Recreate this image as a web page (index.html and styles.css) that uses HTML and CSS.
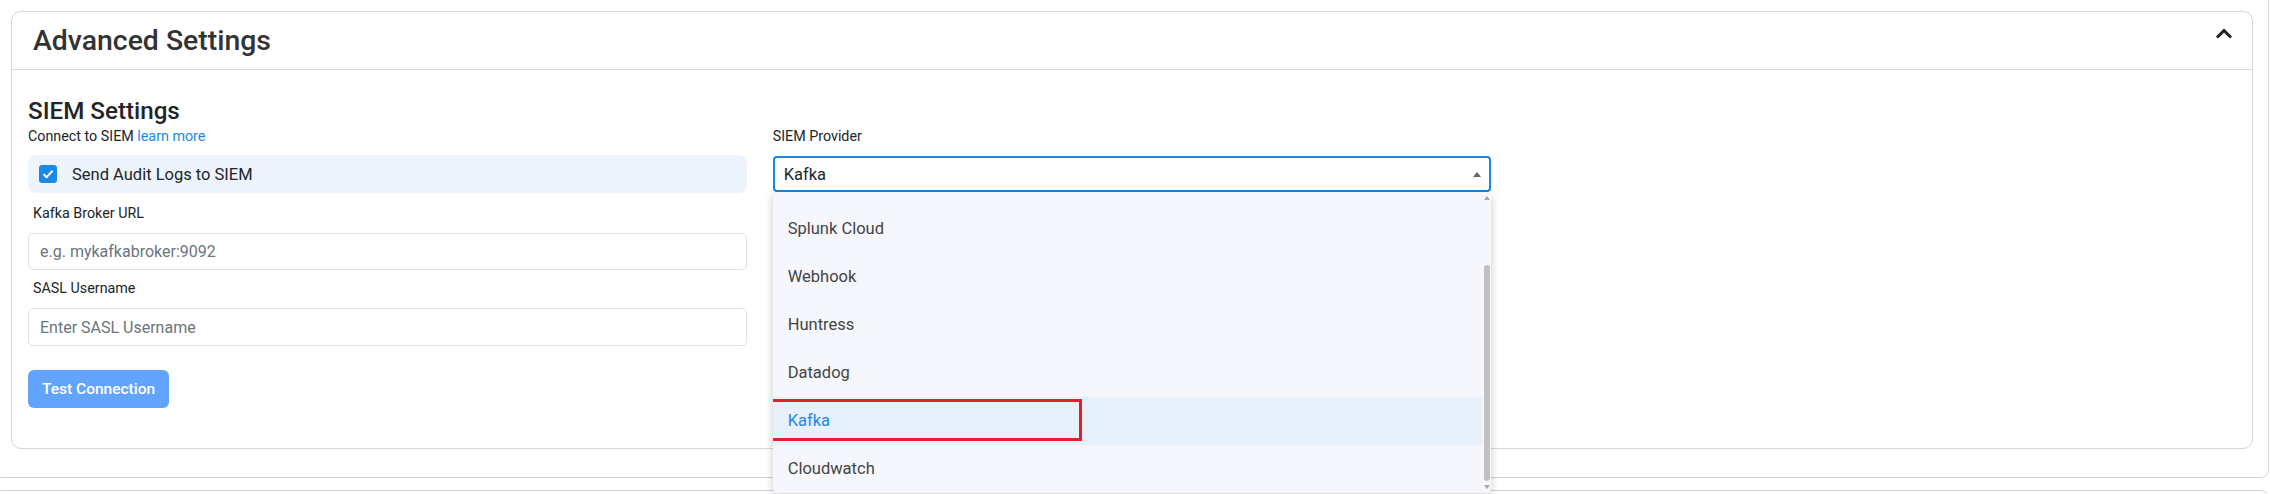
FILE: index.html
```html
<!DOCTYPE html>
<html lang="en">
<head>
<meta charset="utf-8">
<title>Advanced Settings</title>
<link rel="stylesheet" href="styles.css">
</head>
<body>
<div class="page">
  <section class="panel">
    <div class="card">
      <div class="card-header">
        <h2 class="card-title">Advanced Settings</h2>
        <svg class="chevron" width="18" height="11" viewBox="0 0 18 11" aria-hidden="true"><polyline points="2,9.5 9,2.5 16,9.5" fill="none" stroke="#1a1a1a" stroke-width="3"/></svg>
      </div>
      <div class="card-body">
        <h3 class="section-title">SIEM Settings</h3>
        <div class="grid">
          <div class="col">
            <div class="hint">Connect to SIEM <a class="link" href="#">learn more</a></div>
            <label class="check-row">
              <span class="checkbox"><svg width="12" height="10" viewBox="0 0 12 10" aria-hidden="true"><path d="M1.5 5.2 L4.6 8.1 L10.6 1.8" stroke="#fff" stroke-width="2" fill="none"/></svg></span>
              <span class="check-text">Send Audit Logs to SIEM</span>
            </label>
            <div class="field field-first">
              <div class="field-label">Kafka Broker URL</div>
              <input class="input" type="text" placeholder="e.g. mykafkabroker:9092">
            </div>
            <div class="field field-second">
              <div class="field-label">SASL Username</div>
              <input class="input" type="text" placeholder="Enter SASL Username">
            </div>
            <button class="btn" type="button">Test Connection</button>
          </div>
          <div class="col">
            <div class="hint">SIEM Provider</div>
            <div class="select-wrap">
              <div class="select"><span>Kafka</span><span class="caret"></span></div>
              <div class="dropdown">
                <ul class="options">
                  <li class="option">Splunk Cloud</li>
                  <li class="option">Webhook</li>
                  <li class="option">Huntress</li>
                  <li class="option">Datadog</li>
                  <li class="option option-active">Kafka<span class="annotation"></span></li>
                  <li class="option">Cloudwatch</li>
                </ul>
                <div class="scrollbar">
                  <span class="sb-up"></span>
                  <span class="sb-thumb"></span>
                  <span class="sb-down"></span>
                </div>
              </div>
            </div>
          </div>
          <div class="col"></div>
        </div>
      </div>
    </div>
  </section>
  <section class="panel panel-next"></section>
</div>
</body>
</html>
```

FILE: styles.css
```css
html, body {
  margin: 0;
  padding: 0;
  overflow: hidden;
  background: #ffffff;
}

body {
  font-family: Roboto, "Liberation Sans", sans-serif;
  color: #212529;
}

.page {
  margin-left: -6px;
  margin-top: -20px;
  width: 2275px;
}

.panel {
  border: 1px solid #d4d4d4;
  border-radius: 8px;
  padding: 30px 15px 28px 16px;
}

.panel-next {
  margin-top: 12px;
  height: 60px;
  padding: 0;
}

.card {
  border: 1px solid #d6d6d6;
  border-radius: 10px;
  background: #ffffff;
}

.card-header {
  display: flex;
  justify-content: space-between;
  align-items: center;
  height: 57px;
  padding: 0 19px 0 21px;
  border-bottom: 1px solid #d6d6d6;
}

.card-title {
  margin: 0;
  font-size: 28.4px;
  font-weight: 500;
  line-height: 34px;
  color: #333333;
}

.chevron {
  align-self: flex-start;
  margin-top: 16px;
}

.card-body {
  padding: 27px 16px 40px;
}

.section-title {
  margin: 0 0 2px;
  font-size: 24.2px;
  font-weight: 500;
  line-height: 29px;
  color: #212529;
}

.grid {
  display: grid;
  grid-template-columns: repeat(3, 1fr);
  column-gap: 26px;
}

.hint {
  font-size: 14.3px;
  line-height: 17px;
  color: #212529;
}

.link {
  color: #1a8ae6;
  text-decoration: none;
}

.check-row {
  margin-top: 10px;
  height: 38px;
  display: flex;
  align-items: center;
  gap: 15px;
  padding-left: 11px;
  background: #edf4fc;
  border-radius: 8px;
  font-size: 16.5px;
  color: #212529;
}

.checkbox {
  width: 18px;
  height: 18px;
  border-radius: 3px;
  background: #1a8ae6;
  display: flex;
  align-items: center;
  justify-content: center;
}

.field-first {
  margin-top: 11.6px;
}

.field-second {
  margin-top: 9.6px;
}

.field-label {
  padding-left: 5px;
  margin-bottom: 11.4px;
  font-size: 14.3px;
  line-height: 17px;
}

.input {
  display: block;
  width: 100%;
  box-sizing: border-box;
  height: 37.5px;
  border: 1px solid #dee2e6;
  border-radius: 5px;
  padding: 0 11px;
  font-family: Roboto, "Liberation Sans", sans-serif;
  font-size: 16px;
  color: #212529;
  background: #ffffff;
}

.input::placeholder {
  color: #6c757d;
  opacity: 1;
}

.btn {
  display: block;
  margin-top: 24.5px;
  height: 38px;
  padding: 0 14px;
  border: 0;
  border-radius: 6px;
  background: #62a3fd;
  color: #ffffff;
  font-family: Roboto, "Liberation Sans", sans-serif;
  font-size: 15.5px;
  font-weight: 500;
}

.select-wrap {
  position: relative;
  margin-top: 11px;
}

.select {
  height: 36px;
  box-sizing: border-box;
  border: 2px solid #1a87e0;
  border-radius: 4px;
  display: flex;
  align-items: center;
  justify-content: space-between;
  padding: 0 8px 0 9px;
  font-size: 16.5px;
  color: #212529;
  background: #ffffff;
}

.caret {
  width: 0;
  height: 0;
  border-left: 4.5px solid transparent;
  border-right: 4.5px solid transparent;
  border-bottom: 5px solid #666666;
}

.dropdown {
  position: absolute;
  top: 100%;
  left: 0;
  right: 0;
  height: 301px;
  display: flex;
  background: #f5f7fc;
  box-shadow: 0 3px 10px rgba(0, 0, 0, 0.2);
  border-radius: 0 0 4px 4px;
  z-index: 5;
}

.options {
  flex: 1;
  list-style: none;
  margin: 0;
  padding: 13px 0 0;
  overflow: hidden;
}

.option {
  position: relative;
  height: 48px;
  line-height: 48px;
  padding-left: 15px;
  font-size: 16.5px;
  color: #444444;
}

.option-active {
  background: #e8f0fb;
  color: #1a8ae6;
}

.annotation {
  position: absolute;
  left: -3px;
  top: 2px;
  width: 312px;
  height: 42px;
  box-sizing: border-box;
  border: 3px solid #e3202a;
}

.scrollbar {
  width: 9px;
  display: flex;
  flex-direction: column;
  align-items: center;
}

.sb-up {
  margin-top: 4px;
  width: 0;
  height: 0;
  border-left: 3px solid transparent;
  border-right: 3px solid transparent;
  border-bottom: 4px solid #a8a8a8;
}

.sb-thumb {
  margin-top: 65px;
  width: 6px;
  height: 216px;
  border-radius: 3px;
  background: #c1c1c1;
}

.sb-down {
  margin-top: 4px;
  width: 0;
  height: 0;
  border-left: 3px solid transparent;
  border-right: 3px solid transparent;
  border-top: 4px solid #a8a8a8;
}
```
